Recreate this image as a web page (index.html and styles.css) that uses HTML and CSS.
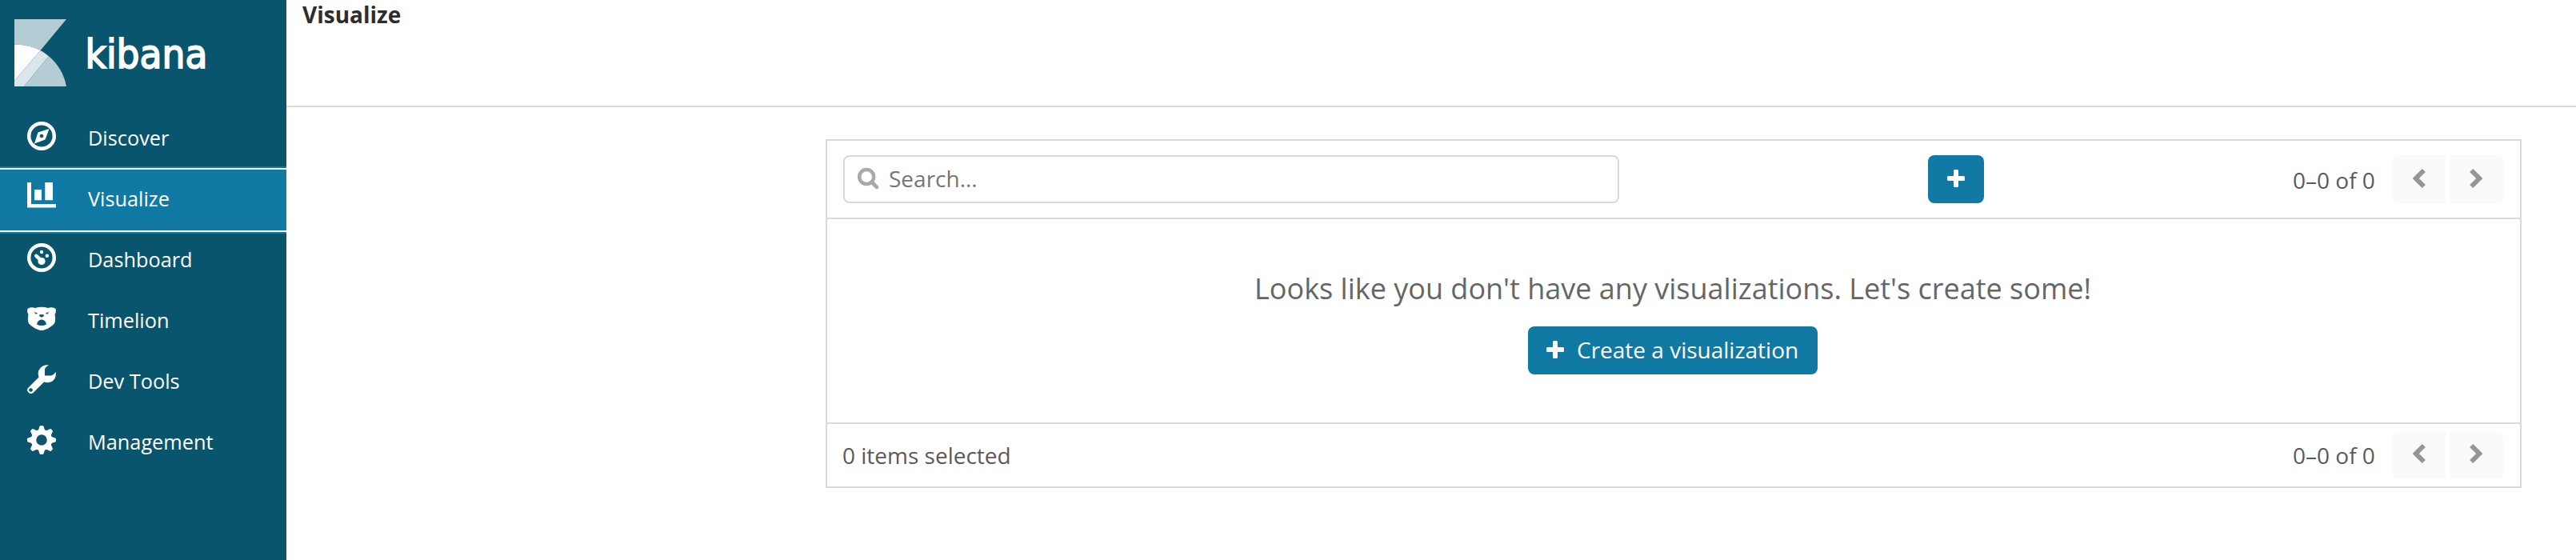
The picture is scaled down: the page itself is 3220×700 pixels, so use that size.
FILE: index.html
```html
<!DOCTYPE html>
<html lang="en">
<head>
<meta charset="utf-8">
<title>Kibana - Visualize</title>
<link rel="stylesheet" href="styles.css">
</head>
<body>
<div class="app">
  <nav class="sidebar">
    <div class="brand">
      <svg class="brand-mark" viewBox="0 0 65 84">
        <path d="M0 0H65L32.6 39Q18 31.500 0 31.500Z" fill="#b4ccd3"/>
        <path d="M0 31.500Q18 31.500 32.600 39L0 77Z" fill="#fff"/>
        <path d="M32.600 39Q38 42 43 46.300L12 84H0V77Z" fill="#dae6e9"/>
        <path d="M43 46.300Q60.500 61 65 84H12Z" fill="#b4ccd3"/>
      </svg>
      <svg class="brand-name" viewBox="0 0 152 60"><text x="-1.500" y="49" textLength="153" lengthAdjust="spacingAndGlyphs">kibana</text></svg>
    </div>
    <a class="nav-item"><svg class="nav-icon" viewBox="0 0 36 36"><circle cx="18" cy="18" r="15.800" fill="none" stroke="#fff" stroke-width="4.400"/><path fill-rule="evenodd" d="M27.500 9L22.500 22.500L9 27.500L13.500 13.500ZM18 15.700a2.300 2.300 0 1 0 .01 0Z"/></svg><span>Discover</span></a>
    <a class="nav-item active"><svg class="nav-icon" viewBox="0 0 36 36"><path d="M0 0H5V27H36V31.500H0ZM9 9H18V22.300H9ZM22.300 0H32V22.300H22.300Z"/></svg><span>Visualize</span></a>
    <a class="nav-item"><svg class="nav-icon" viewBox="0 0 36 36"><circle cx="18" cy="18" r="15.800" fill="none" stroke="#fff" stroke-width="4.400"/><circle cx="18" cy="11" r="2.200"/><circle cx="24.800" cy="15.800" r="2.200"/><circle cx="18" cy="22.500" r="4.600"/><path d="M11.300 15.800L17 21" stroke="#fff" stroke-width="4.400" stroke-linecap="round"/></svg><span>Dashboard</span></a>
    <a class="nav-item"><svg class="nav-icon" viewBox="0 0 36 36"><path fill-rule="evenodd" d="M2 5Q6 3.500 10 5Q18 2.500 26 5Q30 3.500 34 5Q36 5.500 36 8Q36 11 34.500 13Q36 20 34 24.500Q28 30.500 21 32.500Q18 33.700 15 32.500Q8 30.500 2 24.500Q0 20 1.500 13Q0 11 0 8Q0 5.500 2 5ZM9 10L13 11.500Q12 13 10.200 12.300ZM27 10L23 11.500Q24 13 25.800 12.300ZM15 13.500Q18 12.300 21 13.500Q21 16 18 16.500Q15 16 15 13.500ZM12 25.500Q13 20 18 19.500Q23 20 24 25.500Q18 28.500 12 25.500Z"/></svg><span>Timelion</span></a>
    <a class="nav-item"><svg class="nav-icon" viewBox="0 0 36 36"><path fill-rule="evenodd" d="M27 .5Q22 3 22 6V13.500H30Q33 13 35.800 9Q36.500 17 31.500 20.500Q27 23.500 21 21.500L8 34.500Q4.500 37.500 1.500 34.500Q-1.500 31.500 1.500 28.500L14.500 15.500Q12 9 16.500 4Q21-.8 27 .5ZM4.500 29.200a2.300 2.300 0 1 0 .01 0Z"/></svg><span>Dev Tools</span></a>
    <a class="nav-item"><svg class="nav-icon" viewBox="0 0 36 36"><circle cx="18" cy="18" r="10" fill="none" stroke="#fff" stroke-width="6.500"/><g id="teeth"><path d="M13.500 7L15.500 1Q15.800 0 17 0H19Q20.200 0 20.500 1L22.500 7ZM13.500 29L15.500 35Q15.800 36 17 36H19Q20.200 36 20.500 35L22.500 29ZM7 13.500L1 15.500Q0 15.800 0 17V19Q0 20.200 1 20.500L7 22.500ZM29 13.500L35 15.500Q36 15.800 36 17V19Q36 20.200 35 20.500L29 22.500Z"/></g><use href="#teeth" transform="rotate(45 18 18)"/></svg><span>Management</span></a>
  </nav>
  <div class="content">
    <header class="topbar">Visualize</header>
    <main class="panel">
      <div class="toolbar">
        <div class="search">
          <svg class="search-icon" viewBox="0 0 26 26"><circle cx="11.200" cy="11" r="9" fill="none" stroke="#a9a9a9" stroke-width="4.400"/><path d="M18 18L24 24" stroke="#a9a9a9" stroke-width="4.600" stroke-linecap="round"/></svg>
          <span>Search...</span>
        </div>
        <div class="actions"><button class="btn btn-add" aria-label="Add"><svg class="plus" viewBox="0 0 22 22"><rect x="8" width="6" height="22" rx="1.500"/><rect y="8" width="22" height="6" rx="1.500"/></svg></button></div>
        <div class="pager"><span>0–0 of 0</span><div class="pages"><button class="page prev" aria-label="Previous"><svg viewBox="0 0 18 26"><path d="M14.800 3L4.800 13L14.800 23"/></svg></button><button class="page next" aria-label="Next"><svg viewBox="0 0 18 26"><path d="M2.200 3L12.200 13L2.200 23"/></svg></button></div></div>
      </div>
      <div class="empty">
        <p>Looks like you don't have any visualizations. Let's create some!</p>
        <button class="btn btn-create"><svg class="plus" viewBox="0 0 22 22"><rect x="8" width="6" height="22" rx="1.500"/><rect y="8" width="22" height="6" rx="1.500"/></svg><span>Create a visualization</span></button>
      </div>
      <div class="footer">
        <span>0 items selected</span>
        <div class="pager"><span>0–0 of 0</span><div class="pages"><button class="page prev" aria-label="Previous"><svg viewBox="0 0 18 26"><path d="M14.800 3L4.800 13L14.800 23"/></svg></button><button class="page next" aria-label="Next"><svg viewBox="0 0 18 26"><path d="M2.200 3L12.200 13L2.200 23"/></svg></button></div></div>
      </div>
    </main>
  </div>
</div>
</body>
</html>
```
FILE: styles.css
```css
* { box-sizing: border-box; }
body { margin: 0; font-family: "Open Sans", sans-serif; font-size: 28px; line-height: 40px; color: #5a5a5a; background: #fff; }
button { font: inherit; border: 0; padding: 0; margin: 0; }
svg { display: block; flex: none; overflow: visible; }
.app { display: flex; height: 700px; }
.sidebar { width: 358px; flex: none; background: #09556e; color: #fff; }
.brand { height: 134px; padding: 24px 0 0 18px; display: flex; }
.brand-mark { width: 65px; height: 84px; }
.brand-name { width: 152px; height: 60px; margin: 12px 0 0 25px; }
.brand-name text { font-family: "DejaVu Sans", sans-serif; font-size: 50px; fill: #fff; stroke: #fff; stroke-width: 1.8; }
.nav-item { display: flex; height: 76px; padding: 18px 0 0 34px; font-size: 25.3px; }
.nav-item span { margin-left: 40px; line-height: 41px; }
.nav-icon { width: 36px; height: 36px; fill: #fff; }
.active { background: #1079a4; height: 84px; margin: -2px 0 -6px; border: solid #1079a4; border-width: 2px 0; box-shadow: inset 0 2px #fff, inset 0 -2px #fff; }
.content { flex: 1; }
.topbar { height: 134px; border-bottom: 2px solid #d9d9d9; padding-left: 20px; font-weight: 700; line-height: 36px; color: #2d2d2d; }
.panel { margin: 40px 68px 0 674px; height: 436px; border: 2px solid #d9d9d9; }
.toolbar { height: 98px; padding: 18px 21px 0 20px; border-bottom: 2px solid #d9d9d9; display: grid; grid-template-columns: 970px 1fr 263px; }
.search { height: 60px; border: 2px solid #d9d9d9; border-radius: 8px; display: flex; padding: 14px 0 0 16px; color: #757575; }
.search-icon { width: 26px; height: 26px; }
.search span { margin-left: 13px; line-height: 26px; }
.actions { display: flex; justify-content: flex-end; padding-right: 386px; }
.btn { height: 60px; border-radius: 8px; background: #1079a4; color: #fff; display: flex; align-items: center; padding-bottom: 2px; }
.plus { width: 22px; height: 22px; fill: #fff; }
.btn-add { width: 70px; justify-content: center; }
.pager { display: flex; width: 263px; justify-content: space-between; line-height: 62px; }
.pages { display: flex; gap: 5px; }
.page { width: 67px; height: 60px; padding-bottom: 2px; background: #fafafa; display: flex; align-items: center; justify-content: center; }
.page svg { width: 18px; height: 26px; fill: none; stroke: #969696; stroke-width: 6; }
.prev { border-radius: 8px 0 0 8px; }
.next { border-radius: 0 8px 8px 0; }
.empty { height: 256px; border-bottom: 2px solid #d9d9d9; display: flex; flex-direction: column; align-items: center; padding: 62px 2px 0 0; }
.empty p { margin: 0; font-size: 36px; line-height: 50px; color: #666; }
.btn-create { width: 362px; margin-top: 22px; padding-left: 23px; }
.btn-create span { margin-left: 16px; }
.footer { display: flex; justify-content: space-between; padding: 10px 21px 0 19px; line-height: 58px; }
.footer .pager { line-height: 58px; }
.footer .page { height: 59px; padding-bottom: 5px; }
```
